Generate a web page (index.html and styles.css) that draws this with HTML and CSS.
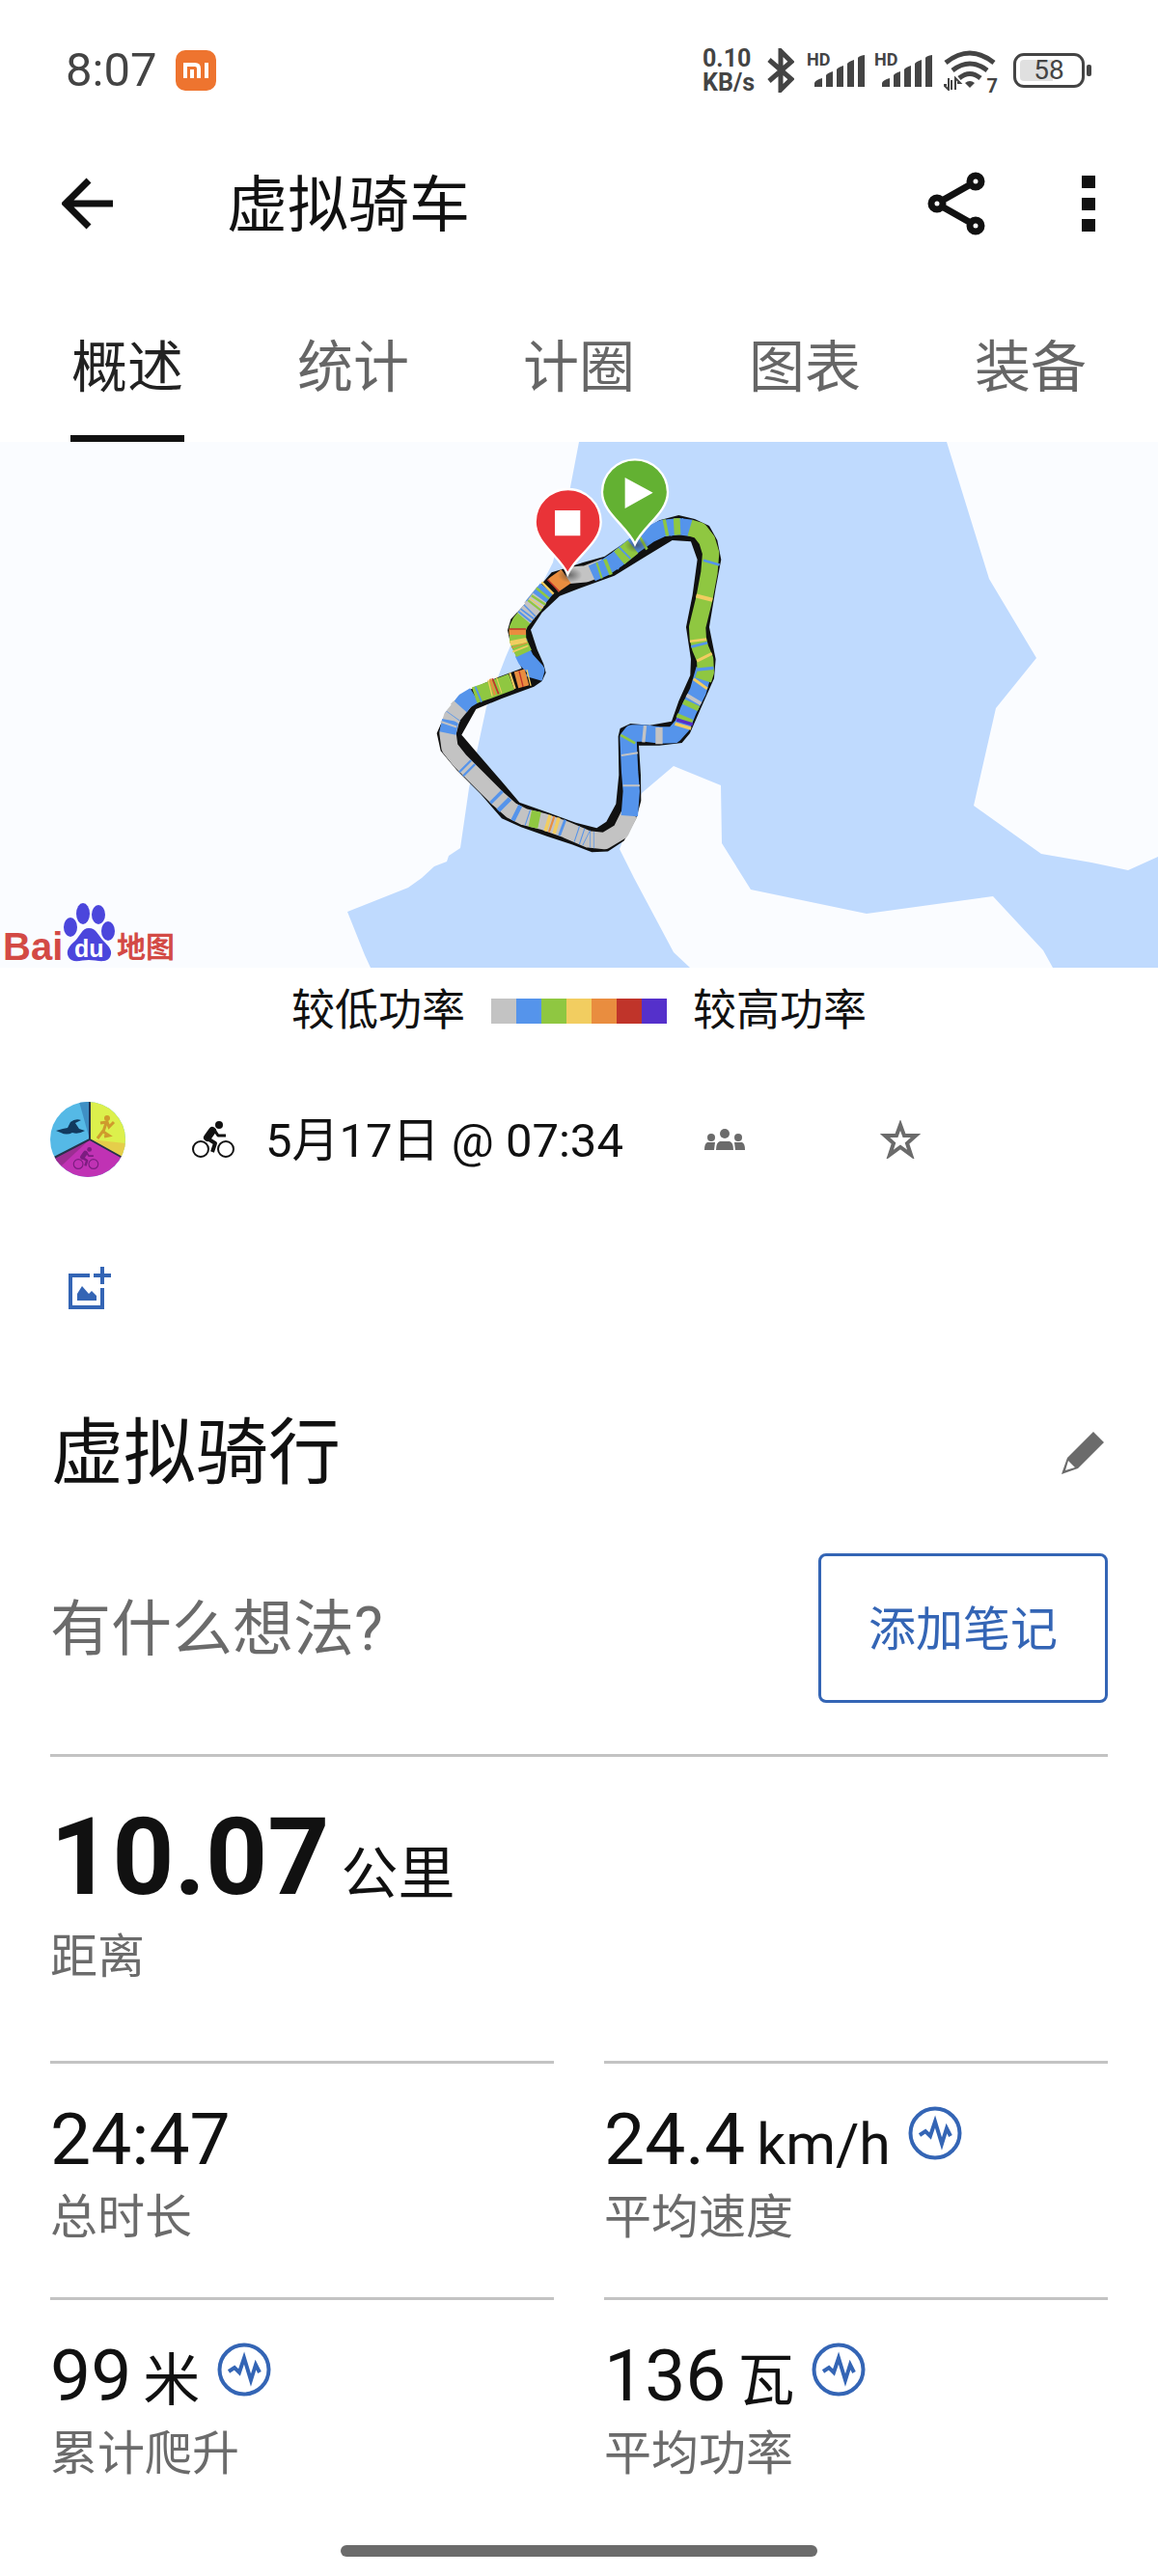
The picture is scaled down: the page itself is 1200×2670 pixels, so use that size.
FILE: index.html
```html
<!DOCTYPE html>
<html lang="zh-CN">

<head>
    <meta charset="UTF-8">
    <meta name="viewport" content="width=device-width, initial-scale=1.0">
    <title>虚拟骑车</title>
    <link rel="stylesheet" href="styles.css">
</head>

<body>
    <svg class="sprite" aria-hidden="true">
        <symbol id="signal" viewBox="0 0 52 34">
            <path d="M0 33v-4q1-3 8-5v9zM12 33V21q1-2 7-4v16zM23 33V15q1-2 7-4v22zM34 33V9q1-2 7-4v28zM45 33V3q1-2 7-3v33z" />
        </symbol>
        <symbol id="wave" viewBox="0 0 56 56">
            <circle cx="28" cy="28" r="25.5" fill="none" stroke="currentColor" stroke-width="4" />
            <path d="M12 30l6-4 5 5 5-15 7 23 5-16 4 8" fill="none" stroke="currentColor" stroke-width="4" />
        </symbol>
        <symbol id="bike" viewBox="0 0 44 38">
            <g fill="none" stroke="currentColor">
                <circle cx="9" cy="29" r="8" stroke-width="2" />
                <circle cx="35" cy="29" r="8" stroke-width="2" />
                <path d="M21 10l-5 7" stroke-width="8" stroke-linejoin="round" stroke-linecap="round" />
                <path d="M16 18l8 5-3 9" stroke-width="4" stroke-linejoin="round" />
                <path d="M23 9l4 6h8" stroke-width="3" stroke-linejoin="round" />
            </g>
            <circle cx="28" cy="4" r="4" />
        </symbol>
    </svg>

    <div class="status-bar">
        <span class="clock">8:07</span>
        <svg class="mi" viewBox="0 0 42 42" aria-label="mi">
            <rect width="42" height="42" rx="10" fill="#ee742f" />
            <path d="M10 29V15h10q4 0 4 4v10M17 20v9M32 13v16" fill="none" stroke="#fff" stroke-width="4" />
        </svg>
        <div class="speed">
            <span>0.10</span>
            <span>KB/s</span>
        </div>
        <svg class="bluetooth" viewBox="0 0 28 46" aria-label="蓝牙">
            <path d="M2 12l23 20-11 11V3l11 11L2 34" />
        </svg>
        <div class="sim">
            <span class="hd">HD</span>
            <svg class="signal"><use href="#signal" /></svg>
        </div>
        <div class="sim">
            <span class="hd">HD</span>
            <svg class="signal"><use href="#signal" /></svg>
        </div>
        <div class="wifi">
            <svg viewBox="0 0 54 42" aria-label="WLAN">
                <path d="M2 13q25-20 50 0M9 21q18-14 36 0M16 29q11-9 22 0" fill="none" stroke="#444" stroke-width="5" />
                <path d="M22 34q5-4 10 0l-5 5z" />
                <path d="M5 29v12l-5-5h3M8 41V31M12 41V29l5 5h-3" fill="none" stroke="#444" stroke-width="2" />
            </svg>
            <span class="gen">7</span>
        </div>
        <div class="battery"><span>58</span></div>
    </div>

    <header class="app-bar">
        <button class="icon-btn" aria-label="返回">
            <svg width="54" height="54" viewBox="0 0 54 54">
                <path d="M53 27H5M28 3L4 27l24 24" fill="none" stroke="currentColor" stroke-width="7" />
            </svg>
        </button>
        <h1>虚拟骑车</h1>
        <button class="icon-btn" aria-label="分享">
            <svg width="60" height="66" viewBox="0 0 60 66">
                <g fill="none" stroke="currentColor" stroke-width="7">
                    <circle cx="10" cy="33" r="6" />
                    <circle cx="50" cy="10" r="6" />
                    <circle cx="50" cy="56" r="6" />
                    <path d="M15 30l30-17M15 36l30 17" />
                </g>
            </svg>
        </button>
        <button class="icon-btn more" aria-label="更多">
            <svg width="14" height="60" viewBox="0 0 14 60">
                <path d="M0 1h14v13H0zM0 24h14v13H0zM0 46h14v13H0z" />
            </svg>
        </button>
    </header>

    <nav class="tabs">
        <a class="tab active" href="#overview">概述</a>
        <a class="tab" href="#stats">统计</a>
        <a class="tab" href="#laps">计圈</a>
        <a class="tab" href="#charts">图表</a>
        <a class="tab" href="#gear">装备</a>
    </nav>

    <main id="overview">
        <svg class="map" viewBox="0 0 1200 545" role="img" aria-label="路线地图">
            <defs>
                <radialGradient id="shade">
                    <stop offset="0" stop-color="#333" stop-opacity=".6" />
                    <stop offset="1" stop-color="#333" stop-opacity="0" />
                </radialGradient>
            </defs>
            <rect width="1200" height="545" fill="#fafcff" />
            <path fill="#bfdafe" d="M600 0H981L1025 142L1074 224L1032 276L1009 377L1079 427L1131 436L1169 444L1200 430V545H1091L1081 527L1029 471L898 489L778 464L748 416L747 356L698 336L665 364L642 422L657 452L698 529L715 545H384L378 532L360 487L423 462L437 452L450 440L463 435L465 429L477 421L486 359L504 275L524 223L530 209L573 125L591 47Z" />
            <g transform="translate(420 -8) scale(.3333)">
                <!-- 路线外框 -->
                <path fill-rule="evenodd" d="M505 415L455 430L420 470L375 525L328 575L318 610L328 655L350 700L362 728L290 755L195 797L160 830L120 880L98 930L110 985L160 1045L235 1120L300 1195L360 1222L440 1250L520 1277L580 1300L630 1298L680 1265L718 1195L733 1140L732 1060L726 968L790 968L860 960L885 930L920 850L960 760L965 700L945 600L965 480L982 390L970 330L945 285L900 264L850 252L790 268L700 325L620 380L550 400Z
                    M480 503L540 480L650 440L740 385L830 330L888 334L908 390L893 500L873 600L888 700L886 750L850 830L828 893L760 905L700 900L668 915L662 940L664 1060L655 1150L625 1205L595 1225L530 1208L440 1175L355 1145L300 1080L235 1005L175 935L220 855L300 822L400 785L425 768L437 742L430 715L410 670L390 608L425 555Z" />
                <g class="route">
                    <path class="grey" d="M500 440L560 435L620 412M190 825L145 880L132 930L138 975L170 1015L230 1075L290 1135L330 1170L370 1190L430 1205L500 1230L570 1260L620 1265L670 1235L697 1180M390 540L430 490" />
                    <path class="blue" d="M580 433L620 415L660 388L710 347L760 312L800 293L850 287L890 292M930 730L910 800L880 860L862 905L835 935L790 936L740 930L705 930L693 945L698 1050L703 1110L697 1187M132 930L140 890M145 883L150 876M170 850L185 830L215 812M400 760L407 735L375 700L365 680M395 535L440 480" />
                    <path class="green" d="M665 385L708 350M735 338L742 334M600 425L606 423M625 415L635 411M805 292L815 290M835 288L855 287M885 291L915 300L938 330L950 370L945 430L930 510L908 600L910 635L917 665L932 700L934 740L926 765M892 835L885 850M871 878L866 890M690 952L694 945M215 812L250 800L330 770M425 498L430 492M369 682L350 640L349 605L358 585L372 568M417 1201L388 1195" />
                    <path class="grey" d="M368 572L398 537L418 509" />
                    <path class="blue" d="M953 396L951 403M913 651L915 659M932 725L933 735M642 404L648 398M680 371L684 367M820 291L825 290M861 287L864 287M225 810L230 808M354 646L355 649M370 570L374 565M378 561L381 557M386 551L389 548M184 1030L189 1035M196 1042L201 1047M280 1125L287 1132M302 1147L312 1157M340 1175L352 1181M379 1192L382 1193M484 1222L492 1225M532 1243L535 1244M548 1250L551 1251M562 1255L564 1256M574 1260L576 1260M585 1262L587 1262" />
                    <path class="green" d="M400 535L404 530M412 519L416 513" />
                    <path class="grey" d="M697 992L698 998M703 1090L703 1096M778 938L800 938M738 932L748 933M900 820L894 830M160 857L170 846M144 885L149 878M134 905L136 899" />
                    <path class="yellow" d="M931 503L928 515M910 637L911 645M928 690L932 698M920 773L915 780M865 903L862 913M262 790L266 789M290 781L293 780M330 768L336 766M382 758L386 757M350 638L353 653M357 665L359 670M406 527L408 524M440 481L445 476M438 1208L448 1211M465 1216L475 1219" />
                    <path class="orange" d="M500 442L470 463L460 471M345 765L378 756M268 787L275 785M349 606L349 624M355 655L356 658M452 1212L458 1214" />
                    <path class="red" d="M349 604L349 608M278 785L283 783M358 761L362 760M459 472L462 469" />
                    <path class="violet" d="M870 890L867 900" />
                </g>
                <ellipse cx="512" cy="438" rx="38" ry="24" fill="url(#shade)" />
                <ellipse cx="720" cy="345" rx="38" ry="24" fill="url(#shade)" />
                <g stroke="#fff" stroke-width="7">
                    <path fill="#63b132" d="M714 342C690 286 612 245 612 181a102 102 0 0 1 204 0C816 245 738 286 714 342z" />
                    <path fill="#e93338" d="M505 435C482 380 404 340 404 273a102 102 0 0 1 204 0C608 340 528 380 505 435z" />
                </g>
                <path fill="#fff" d="M683 135l87 47-87 49zM465 237h79v79h-79z" />
            </g>
            <g class="baidu">
                <text x="3" y="537" font-size="40">Bai</text>
                <g fill="#4b46dc">
                    <ellipse cx="73" cy="503" rx="7" ry="10" />
                    <ellipse cx="86" cy="489" rx="7" ry="11" />
                    <ellipse cx="102" cy="490" rx="7" ry="10" />
                    <ellipse cx="112" cy="507" rx="7" ry="10" />
                    <path d="M92 504c8 0 10 8 15 13 7 7 10 11 7 17-4 7-14 3-22 3s-17 4-21-3c-3-6 0-11 7-17 5-5 7-13 14-13z" />
                </g>
                <text class="du" x="77" y="534" font-size="25">du</text>
                <text class="cn" x="121" y="534" font-size="30">地图</text>
            </g>
        </svg>

        <div class="legend">
            <span>较低功率</span>
            <div class="scale">
                <i class="bg-grey"></i><i class="bg-blue"></i><i class="bg-green"></i><i class="bg-yellow"></i><i class="bg-orange"></i><i class="bg-red"></i><i class="bg-violet"></i>
            </div>
            <span>较高功率</span>
        </div>

        <div class="meta">
            <svg class="avatar" viewBox="0 0 78 78" aria-label="头像">
                <clipPath id="round"><circle cx="39" cy="39" r="39" /></clipPath>
                <g clip-path="url(#round)">
                    <rect width="78" height="78" fill="#55b9e6" />
                    <path d="M30 0h11v39z" fill="#3f8fc4" />
                    <path d="M41 0h37v60L41 39z" fill="#dcf04c" />
                    <path d="M41 39l37 4v17z" fill="#e5ce4a" />
                    <path d="M0 60l41-21 37 20v19H0z" fill="#c032b4" />
                    <path d="M0 60l41-21-29 27z" fill="#9c2d92" />
                    <path d="M41 0v39L4 58M41 39l34 19" fill="none" stroke="#26324a" stroke-width="2" />
                    <path d="M6 30l7-2 5-1 3-6q5-4 11-2l-6 3 4 6 6 2q-7 4-13 2-6 3-12 0z" fill="#123a5e" />
                    <circle cx="59" cy="17" r="3" fill="#cf9b2d" />
                    <path d="M52 22l7-1 2 5 5-5M58 22l-3 9 6 4-5 1M55 30l-6 8" fill="none" stroke="#cf9b2d" stroke-width="3" />
                    <use href="#bike" x="21" y="47" width="32" height="23" class="avatar-bike" />
                </g>
            </svg>
            <svg class="sport" width="44" height="38" aria-label="骑行"><use href="#bike" /></svg>
            <time class="date" datetime="05-17T07:34">5月17日 @ 07:34</time>
            <svg class="people" viewBox="0 0 42 22" aria-label="所有人">
                <circle cx="7" cy="9" r="4" />
                <circle cx="21" cy="5" r="5" />
                <circle cx="35" cy="9" r="4" />
                <path d="M0 22q0-7 3-8h8l-1 8zM12 22q0-8 4-9h10q4 1 4 9zM32 22l-1-8h8q3 1 3 8z" />
            </svg>
            <button class="icon-btn star" aria-label="收藏">
                <svg width="42" height="40" viewBox="0 0 42 40">
                    <path d="M21 5l4 11h12l-9 8 4 12-11-8-11 8 4-12-9-8h12z" fill="none" stroke="currentColor" stroke-width="4" />
                </svg>
            </button>
        </div>

        <div class="photo-row">
            <button class="icon-btn add-photo" aria-label="添加照片">
                <svg width="44" height="44" viewBox="0 0 44 44">
                    <path d="M22 9H2v33h33V22" fill="none" stroke="currentColor" stroke-width="4" />
                    <path d="M35 0v18M26 9h18" fill="none" stroke="currentColor" stroke-width="4" />
                    <path d="M9 35v-7l5-8 7 8 3-3 5 5v5z" />
                </svg>
            </button>
        </div>

        <div class="title-row">
            <h2>虚拟骑行</h2>
            <button class="icon-btn edit" aria-label="编辑">
                <svg width="44" height="44" viewBox="0 0 44 44">
                    <path fill-rule="evenodd" d="M33 0l11 11-27 27-17 6 6-17zM7 30l-3 10 10-3z" />
                </svg>
            </button>
        </div>

        <div class="note-row">
            <p>有什么想法?</p>
            <button class="add-note">添加笔记</button>
        </div>

        <section class="distance">
            <div class="value"><strong>10.07</strong><span class="unit">公里</span></div>
            <div class="label">距离</div>
        </section>

        <section class="grid">
            <div class="stat">
                <div class="value">24:47</div>
                <div class="label">总时长</div>
            </div>
            <div class="stat">
                <div class="value">24.4<span class="unit">km/h</span><svg class="wave"><use href="#wave" /></svg></div>
                <div class="label">平均速度</div>
            </div>
            <div class="stat">
                <div class="value">99<span class="unit">米</span><svg class="wave"><use href="#wave" /></svg></div>
                <div class="label">累计爬升</div>
            </div>
            <div class="stat">
                <div class="value">136<span class="unit">瓦</span><svg class="wave"><use href="#wave" /></svg></div>
                <div class="label">平均功率</div>
            </div>
        </section>
    </main>

    <div class="home-bar"></div>
</body>

</html>
```
FILE: styles.css
```css
* {
    box-sizing: border-box;
}

body {
    margin: 0;
    background-color: #fff;
    color: #111;
    font-family: Roboto, "Noto Sans CJK SC", sans-serif;
    font-size: 49px;
}

h1,
h2,
p {
    margin: 0;
    font-weight: 400;
}

svg {
    display: block;
    flex: none;
    fill: currentColor;
}

button {
    font: inherit;
    color: inherit;
    background: none;
    border: 0;
    padding: 0;
    cursor: pointer;
}

.sprite {
    position: absolute;
    width: 0;
    height: 0;
}

/* 状态栏 */
.status-bar {
    display: flex;
    align-items: center;
    height: 146px;
    padding: 0 76px 0 68px;
    color: #444;
}

.clock {
    line-height: 56px;
}

.mi {
    width: 42px;
    height: 42px;
    margin-left: 20px;
}

.speed {
    display: flex;
    flex-direction: column;
    margin-left: auto;
    font-size: 25px;
    font-weight: 700;
    line-height: 25px;
}

.bluetooth {
    width: 28px;
    height: 46px;
    margin: 0 13px;
    fill: none;
    stroke: #444;
    stroke-width: 5px;
}

.sim {
    position: relative;
    padding: 2px 0 0 8px;
    margin-right: 10px;
}

.hd {
    position: absolute;
    top: -3px;
    left: 0;
    font-size: 18px;
    font-weight: 700;
    line-height: 20px;
}

.signal {
    width: 52px;
    height: 34px;
}

.wifi {
    position: relative;
    width: 54px;
    margin: 0 18px 0 2px;
}

.gen {
    position: absolute;
    right: -2px;
    bottom: -4px;
    padding-left: 2px;
    background-color: #fff;
    font-size: 20px;
    font-weight: 700;
    line-height: 18px;
}

.battery {
    position: relative;
    width: 74px;
    height: 36px;
    border: 3px solid #444;
    border-radius: 11px;
    background: linear-gradient(90deg, #e0e0e0 56%, #fff 56%) content-box;
    padding: 4px;
}

.battery span {
    position: absolute;
    inset: 0;
    font-size: 28px;
    line-height: 30px;
    text-align: center;
}

.battery::after {
    content: "";
    position: absolute;
    top: 9px;
    right: -10px;
    width: 5px;
    height: 12px;
    border-radius: 2px;
    background-color: #444;
}

/* 标题栏 */
.app-bar {
    display: flex;
    align-items: center;
    height: 130px;
    padding: 0 65px 0 64px;
}

.app-bar h1 {
    flex: 1;
    margin-left: 117px;
    padding-top: 3px;
    font-size: 63px;
    line-height: 80px;
}

.more {
    margin-left: 100px;
}

.tabs {
    display: flex;
    height: 182px;
    padding: 65px 15px 0;
}

.tab {
    display: flex;
    flex: 1;
    justify-content: center;
    color: #666;
    font-size: 58px;
    line-height: 80px;
    text-decoration: none;
}

.tab.active {
    color: #222;
}

.tab.active::after {
    content: "";
    position: absolute;
    width: 118px;
    height: 7px;
    margin-top: 110px;
    background-color: #111;
}

/* 地图 */
.map {
    width: 100%;
    height: auto;
}

.route path {
    fill: none;
    stroke-width: 52px;
    stroke-linejoin: round;
}

.grey { stroke: #c3c3c3; }
.blue { stroke: #5594eb; }
.green { stroke: #8fc741; }
.yellow { stroke: #f2cd60; }
.orange { stroke: #e98d3f; }
.red { stroke: #c0342a; }
.violet { stroke: #5530cb; }

.baidu {
    fill: #d34a45;
    font-family: "Liberation Sans", sans-serif;
    font-weight: 700;
}

.baidu .du {
    fill: #fff;
}

.baidu .cn {
    font-family: "Noto Sans CJK SC", sans-serif;
}

.legend {
    display: flex;
    justify-content: center;
    align-items: center;
    gap: 27px;
    height: 86px;
    padding-top: 3px;
    font-size: 45px;
    line-height: 60px;
}

.scale {
    display: flex;
}

.scale i {
    width: 26px;
    height: 26px;
}

.bg-grey { background-color: #c3c3c3; }
.bg-blue { background-color: #5594eb; }
.bg-green { background-color: #8fc741; }
.bg-yellow { background-color: #f2cd60; }
.bg-orange { background-color: #e98d3f; }
.bg-red { background-color: #c0342a; }
.bg-violet { background-color: #5530cb; }

/* 活动信息 */
.meta {
    display: flex;
    align-items: center;
    height: 184px;
    padding: 0 52px;
}

.avatar {
    width: 78px;
    height: 78px;
}

.avatar-bike {
    color: #7c1d80;
}

.sport {
    margin: 0 32px 0 69px;
}

.date {
    padding-top: 3px;
    line-height: 64px;
}

.people {
    width: 42px;
    height: 22px;
    margin: 0 140px 0 84px;
    color: #6b6b6b;
}

.star,
.edit {
    color: #6b6b6b;
}

.photo-row {
    display: flex;
    align-items: center;
    height: 124px;
    padding: 0 71px;
}

.add-photo {
    color: #3465b5;
}

.title-row {
    display: flex;
    justify-content: space-between;
    align-items: center;
    height: 213px;
    padding: 4px 56px 0 53px;
}

.title-row h2 {
    font-size: 75px;
    line-height: 100px;
}

.note-row {
    display: flex;
    justify-content: space-between;
    align-items: center;
    margin: 0 52px;
    padding-bottom: 53px;
    border-bottom: 3px solid #c3c3c3;
}

.note-row p {
    padding-top: 3px;
    color: #6b6b6b;
    font-size: 63px;
    line-height: 80px;
}

.add-note {
    width: 300px;
    height: 155px;
    padding-bottom: 6px;
    border: 3px solid #3465b5;
    border-radius: 8px;
    color: #3465b5;
}

/* 数据 */
.value {
    display: flex;
    align-items: baseline;
    font-size: 75px;
    line-height: 76px;
}

.unit {
    margin-left: 12px;
    font-size: 59px;
    line-height: 50px;
}

.label {
    margin-top: 14px;
    color: #6b6b6b;
    line-height: 60px;
}

.distance {
    padding: 48px 52px 77px;
}

.distance strong {
    font-size: 112px;
    line-height: 112px;
}

.distance .label {
    margin-top: 18px;
}

.grid {
    display: grid;
    grid-template-columns: 1fr 1fr;
    column-gap: 52px;
    padding: 0 52px;
}

.stat {
    padding: 40px 0 52px;
    border-top: 3px solid #c3c3c3;
}

.wave {
    align-self: flex-start;
    width: 56px;
    height: 56px;
    margin: 4px 0 0 18px;
    color: #3465b5;
}

.home-bar {
    width: 494px;
    height: 12px;
    margin: 12px auto 20px;
    border-radius: 6px;
    background-color: #6b6b6b;
}
```
